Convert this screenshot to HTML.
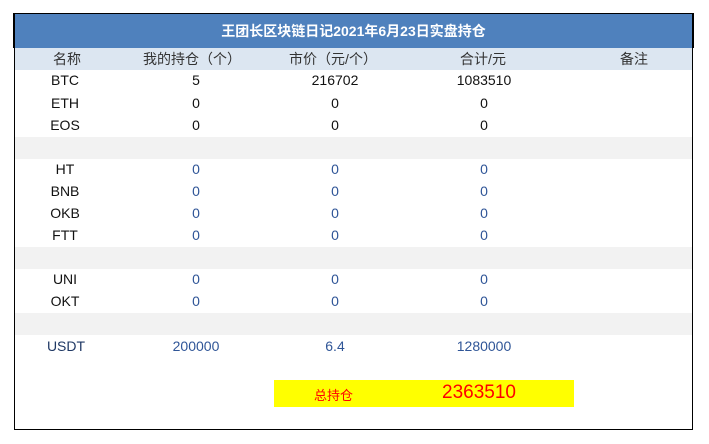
<!DOCTYPE html><html><head><meta charset="utf-8"><style>
body{margin:0;width:709px;height:444px;background:#fff;font-family:"Liberation Sans","Noto Sans CJK SC",sans-serif;overflow:hidden}
.f{position:absolute;left:14px;top:14px;width:679px;height:416px;border:1px solid #000;border-top:none;box-sizing:border-box}
.t{position:absolute;left:13px;top:13px;width:681px;height:35px;background:#4f81bd;border:1px solid #000;border-bottom:none;box-sizing:border-box;color:#fff;font-weight:bold;font-size:14px;text-align:center;line-height:34px}
.r{position:absolute;left:15px;width:677px;height:22px;font-size:14px;line-height:22px}
.r span{position:absolute;transform:translateX(-50%);white-space:nowrap}
.g{position:absolute;left:15px;width:677px;height:22px;background:#f2f2f2}
.b{color:#2f5597}
</style></head><body>
<div class="t">王团长区块链日记2021年6月23日实盘持仓</div>
<div class="f"></div>
<div class="r" style="top:48px;background:#dce6f1;color:#333"><span style="left:52px">名称</span><span style="left:177px">我的持仓（个）</span><span style="left:318px">市价（元/个）</span><span style="left:468px">合计/元</span><span style="left:619px">备注</span></div>
<div class="r" style="top:69px;color:#111"><span style="left:50px">BTC</span><span style="left:181px">5</span><span style="left:320px">216702</span><span style="left:469px">1083510</span></div>
<div class="r" style="top:92px;color:#111"><span style="left:50px">ETH</span><span style="left:181px">0</span><span style="left:320px">0</span><span style="left:469px">0</span></div>
<div class="r" style="top:114px;color:#111"><span style="left:50px">EOS</span><span style="left:181px">0</span><span style="left:320px">0</span><span style="left:469px">0</span></div>
<div class="g" style="top:137px"></div>
<div class="r" style="top:158px;color:#111"><span style="left:50px">HT</span><span class="b" style="left:181px">0</span><span class="b" style="left:320px">0</span><span class="b" style="left:469px">0</span></div>
<div class="r" style="top:180px;color:#111"><span style="left:50px">BNB</span><span class="b" style="left:181px">0</span><span class="b" style="left:320px">0</span><span class="b" style="left:469px">0</span></div>
<div class="r" style="top:202px;color:#111"><span style="left:50px">OKB</span><span class="b" style="left:181px">0</span><span class="b" style="left:320px">0</span><span class="b" style="left:469px">0</span></div>
<div class="r" style="top:224px;color:#111"><span style="left:50px">FTT</span><span class="b" style="left:181px">0</span><span class="b" style="left:320px">0</span><span class="b" style="left:469px">0</span></div>
<div class="g" style="top:247px"></div>
<div class="r" style="top:268px;color:#111"><span style="left:50px">UNI</span><span class="b" style="left:181px">0</span><span class="b" style="left:320px">0</span><span class="b" style="left:469px">0</span></div>
<div class="r" style="top:290px;color:#111"><span style="left:50px">OKT</span><span class="b" style="left:181px">0</span><span class="b" style="left:320px">0</span><span class="b" style="left:469px">0</span></div>
<div class="g" style="top:313px"></div>
<div class="r" style="top:335px;color:#1f3864"><span style="left:51px">USDT</span><span class="b" style="left:181px">200000</span><span class="b" style="left:320px">6.4</span><span class="b" style="left:469px">1280000</span></div>
<div style="position:absolute;left:274px;top:380px;width:300px;height:27px;background:#ff0;color:#f00">
<span style="position:absolute;left:40px;top:5px;font-size:13px">总持仓</span>
<span style="position:absolute;left:168px;top:2px;font-size:19px">2363510</span></div>
</body></html>
